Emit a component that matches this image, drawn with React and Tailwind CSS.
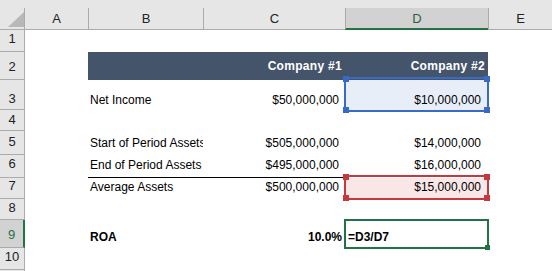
import React from "react";

function RowHead({ n, pb, sel }) {
  return (
    <div
      className={`w-[25px] shrink-0 flex justify-center items-end ${pb} border-b border-b-[#ABABAB] text-[13px] leading-[14px] ${
        sel
          ? "bg-[#D2D2D2] border-r-2 border-r-[#217346] text-[#217346]"
          : "bg-[#E6E6E6] border-r border-r-[#ABABAB] text-[#222]"
      }`}
    >
      {n}
    </div>
  );
}

function Row({ n, h, pb, sel, children }) {
  return (
    <div className={`flex ${h}`}>
      <RowHead n={n} pb={pb} sel={sel} />
      {children}
    </div>
  );
}

function ColHead({ w, label, sel, first }) {
  return (
    <div className={`${w} shrink-0 h-full flex flex-col`}>
      <div className="h-[8px]" />
      <div
        className={`flex-1 flex items-center justify-center pt-[1px] text-[13px] leading-[14px] ${
          first ? "" : "border-l border-l-[#ABABAB]"
        } ${
          sel
            ? "bg-[#D2D2D2] border-b-2 border-b-[#217346] text-[#2E5E43]"
            : "border-b border-b-[#ABABAB] text-[#222]"
        }`}
      >
        {label}
      </div>
    </div>
  );
}

export default function App() {
  return (
    <div className="w-[552px] h-[271px] overflow-hidden bg-white font-['Liberation_Sans',Arial,sans-serif] text-black">
      {/* column header */}
      <div className="flex h-[30px] bg-[#E6E6E6]">
        <div className="w-[25px] shrink-0 h-full flex flex-col">
          <div className="h-[8px]" />
          <div className="flex-1 flex items-end justify-end pb-[2px] border-r border-r-[#ABABAB] border-b border-b-[#ABABAB]">
            <svg width="16" height="15" viewBox="0 0 16 15">
              <polygon points="16,0 16,15 0,15" fill="#B8B8B8" />
            </svg>
          </div>
        </div>
        <ColHead w="w-[63px]" label="A" first />
        <ColHead w="w-[115px]" label="B" />
        <ColHead w="w-[142px]" label="C" />
        <ColHead w="w-[143px]" label="D" sel />
        <div className="flex-1 h-full flex flex-col">
          <div className="h-[8px]" />
          <div className="flex-1 flex items-center justify-center pt-[1px] text-[13px] leading-[14px] border-l border-l-[#ABABAB] border-b border-b-[#ABABAB] text-[#222]">
            E
          </div>
        </div>
      </div>

      {/* row 1 */}
      <Row n="1" h="h-[22px]" pb="pb-[5px]" />

      {/* row 2 */}
      <Row n="2" h="h-[28px]" pb="pb-[5px]">
        <div className="w-[63px] shrink-0" />
        <div className="w-[115px] shrink-0 bg-[#44546A]" />
        <div className="w-[142px] shrink-0 bg-[#44546A] flex items-center justify-end pr-[3px] text-white font-bold text-[12px] leading-[14px] tracking-[0.3px]">
          Company #1
        </div>
        <div className="w-[143px] shrink-0 bg-[#44546A] flex items-center justify-end pr-[3px] text-white font-bold text-[12px] leading-[14px] tracking-[0.3px]">
          Company #2
        </div>
      </Row>

      {/* row 3 */}
      <Row n="3" h="h-[30px]" pb="pb-[3px]">
        <div className="w-[63px] shrink-0" />
        <div className="w-[115px] shrink-0 flex items-end pb-[3px] pl-[2px] text-[12px] leading-[14px] whitespace-nowrap overflow-hidden">
          Net Income
        </div>
        <div className="w-[142px] shrink-0 flex items-end justify-end pb-[3px] pr-[6px] text-[12px] leading-[14px]">
          $50,000,000
        </div>
        <div className="w-[143px] shrink-0 relative bg-[#E8EEF8] flex items-end justify-end pb-[3px] pr-[7px] text-[12px] leading-[14px]">
          $10,000,000
          <div className="absolute -top-[3px] -bottom-[2px] -left-[1px] -right-[1px] border-2 border-[#3A6BC4]">
            <div className="absolute -top-[3px] -left-[3px] w-[6px] h-[6px] bg-[#3A6BC4]" />
            <div className="absolute -top-[3px] -right-[3px] w-[6px] h-[6px] bg-[#3A6BC4]" />
            <div className="absolute -bottom-[3px] -left-[3px] w-[6px] h-[6px] bg-[#3A6BC4]" />
            <div className="absolute -bottom-[3px] -right-[3px] w-[6px] h-[6px] bg-[#3A6BC4]" />
          </div>
        </div>
      </Row>

      {/* row 4 */}
      <Row n="4" h="h-[21px]" pb="pb-[3px]" />

      {/* row 5 */}
      <Row n="5" h="h-[24px]" pb="pb-[5px]">
        <div className="w-[63px] shrink-0" />
        <div className="w-[115px] shrink-0 flex items-end pb-[5px] pl-[2px] text-[12px] leading-[14px] whitespace-nowrap overflow-hidden">
          Start of Period Assets
        </div>
        <div className="w-[142px] shrink-0 flex items-end justify-end pb-[5px] pr-[6px] text-[12px] leading-[14px]">
          $505,000,000
        </div>
        <div className="w-[143px] shrink-0 flex items-end justify-end pb-[5px] pr-[7px] text-[12px] leading-[14px]">
          $14,000,000
        </div>
      </Row>

      {/* row 6 */}
      <Row n="6" h="h-[23px]" pb="pb-[6px]">
        <div className="w-[63px] shrink-0" />
        <div className="w-[115px] shrink-0 flex items-end pb-[5px] pl-[2px] text-[12px] leading-[14px] whitespace-nowrap overflow-hidden border-b border-b-black">
          End of Period Assets
        </div>
        <div className="w-[142px] shrink-0 flex items-end justify-end pb-[5px] pr-[6px] text-[12px] leading-[14px] border-b border-b-black">
          $495,000,000
        </div>
        <div className="w-[143px] shrink-0 flex items-end justify-end pb-[6px] pr-[7px] text-[12px] leading-[14px]">
          $16,000,000
        </div>
      </Row>

      {/* row 7 */}
      <Row n="7" h="h-[21px]" pb="pb-[5px]">
        <div className="w-[63px] shrink-0" />
        <div className="w-[115px] shrink-0 flex items-end pb-[5px] pl-[2px] text-[12px] leading-[14px] whitespace-nowrap overflow-hidden">
          Average Assets
        </div>
        <div className="w-[142px] shrink-0 flex items-end justify-end pb-[5px] pr-[6px] text-[12px] leading-[14px]">
          $500,000,000
        </div>
        <div className="w-[143px] shrink-0 relative bg-[#F9E7E7] flex items-end justify-end pb-[5px] pr-[7px] text-[12px] leading-[14px]">
          $15,000,000
          <div className="absolute -top-[3px] -bottom-[1px] -left-[1px] -right-[1px] border-2 border-[#C23A3E]">
            <div className="absolute -top-[3px] -left-[3px] w-[6px] h-[6px] bg-[#C23A3E]" />
            <div className="absolute -top-[3px] -right-[3px] w-[6px] h-[6px] bg-[#C23A3E]" />
            <div className="absolute -bottom-[3px] -left-[3px] w-[6px] h-[6px] bg-[#C23A3E]" />
            <div className="absolute -bottom-[3px] -right-[3px] w-[6px] h-[6px] bg-[#C23A3E]" />
          </div>
        </div>
      </Row>

      {/* row 8 */}
      <Row n="8" h="h-[21px]" pb="pb-[4px]" />

      {/* row 9 */}
      <Row n="9" h="h-[28px]" pb="pb-[5px]" sel>
        <div className="w-[63px] shrink-0" />
        <div className="w-[115px] shrink-0 flex items-end pb-[4px] pl-[2px] text-[12px] leading-[14px] font-bold whitespace-nowrap overflow-hidden">
          ROA
        </div>
        <div className="w-[142px] shrink-0 flex items-end justify-end pb-[4px] pr-[3px] text-[12px] leading-[14px] font-bold">
          10.0%
        </div>
        <div className="w-[143px] shrink-0 relative flex items-end pb-[4px] pl-[3px] text-[12px] leading-[14px] font-bold">
          =D3/D7
          <div className="absolute -top-[1px] -bottom-[1px] -left-[1px] -right-[1px] border-2 border-[#217346]">
            <div className="absolute -bottom-[3px] -right-[3px] w-[5px] h-[5px] bg-[#217346]" />
          </div>
        </div>
      </Row>

      {/* row 10 */}
      <Row n="10" h="h-[22px]" pb="pb-[5px]" />

      {/* remainder of the grid below row 10 */}
      <Row n="" h="h-[22px]" pb="pb-[5px]" />
    </div>
  );
}
